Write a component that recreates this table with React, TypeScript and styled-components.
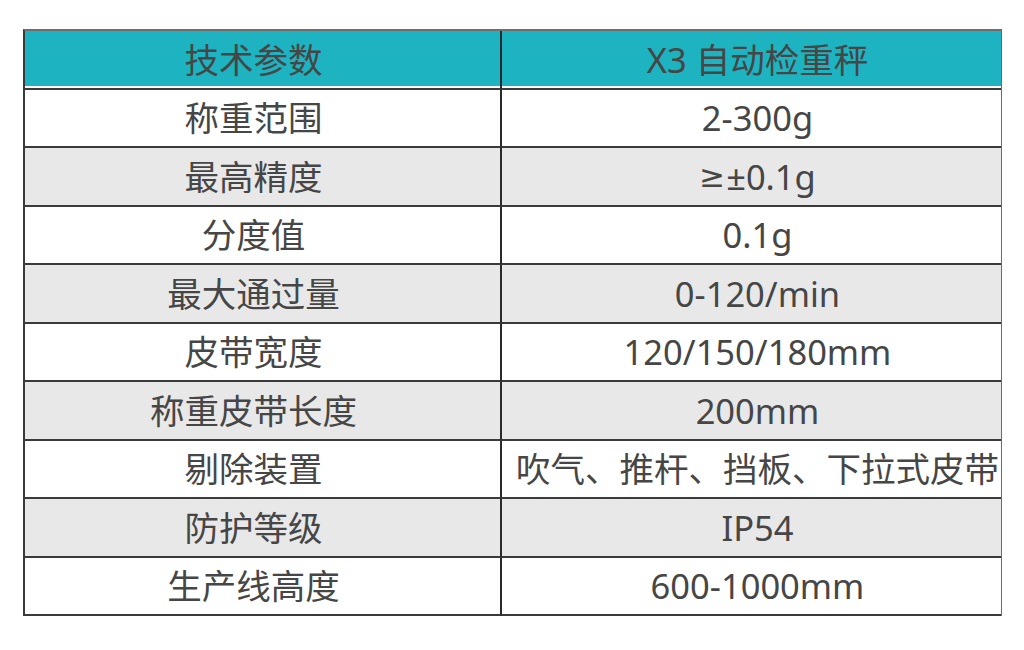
import React from "react";
import styled, { createGlobalStyle } from "styled-components";

const Global = createGlobalStyle`
  html, body { margin: 0; padding: 0; background: #ffffff; }
  body { font-family: "Noto Sans", "Noto Sans CJK SC", sans-serif; }
`;

const Page = styled.div`
  padding: 29px 0 0 23px;
`;

const Table = styled.div`
  width: 979px;
  display: grid;
  grid-template-columns: 477px 1fr;
  grid-auto-rows: 58.5px;
  border-top: 2px solid #6e6e6e;
  border-left: 2px solid #3a3a3a;
  border-right: 1px solid #6a6a6a;
  box-sizing: border-box;
`;

const Cell = styled.div<{ $head?: boolean; $shade?: boolean; $last?: boolean }>`
  display: flex;
  align-items: center;
  justify-content: center;
  background: ${(p) => (p.$head ? "#1db3c1" : p.$shade ? "#e8e8e8" : "#ffffff")};
  border-bottom: 2px solid #3a3a3a;
  border-right: ${(p) => (p.$last ? "none" : "2px solid #2a2a2a")};
  box-shadow: ${(p) => (p.$head ? "inset 0 -2px 0 #ffffff" : "none")};
  color: #464646;
  font-size: 34.5px;
  font-weight: 400;
  line-height: 1;
  white-space: nowrap;
  box-sizing: border-box;
  padding: 1px ${(p) => (p.$last ? "0 0 12px" : "18px 0 0")};
`;

const Sym = styled.span`
  font-family: "DejaVu Sans", sans-serif;
  font-size: 31px;
  margin-right: 1px;
`;

const rows: [string, React.ReactNode][] = [
  ["称重范围", "2-300g"],
  ["最高精度", <><Sym>≥</Sym>±0.1g</>],
  ["分度值", "0.1g"],
  ["最大通过量", "0-120/min"],
  ["皮带宽度", "120/150/180mm"],
  ["称重皮带长度", "200mm"],
  ["剔除装置", "吹气、推杆、挡板、下拉式皮带"],
  ["防护等级", "IP54"],
  ["生产线高度", "600-1000mm"],
];

export default function App() {
  return (
    <>
      <Global />
      <Page>
        <Table>
          <Cell $head>技术参数</Cell>
          <Cell $head $last>X3 自动检重秤</Cell>
          {rows.map(([k, v], i) => (
            <React.Fragment key={k}>
              <Cell $shade={i % 2 === 1}>{k}</Cell>
              <Cell $shade={i % 2 === 1} $last>{v}</Cell>
            </React.Fragment>
          ))}
        </Table>
      </Page>
    </>
  );
}
